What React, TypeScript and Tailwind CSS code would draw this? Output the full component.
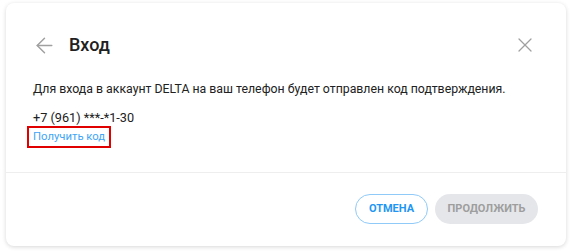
import React from 'react';
import { ArrowLeft, X } from 'lucide-react';

const App = () => {
  return (
    <div className="w-[572px] h-[251px] bg-white pt-[3px] pl-[6px]" style={{ fontFamily: 'Roboto, "Liberation Sans", sans-serif' }}>
      <div className="w-[560px] h-[243px] rounded-lg bg-white shadow-[0_1px_4px_rgba(0,0,0,0.16)] flex flex-col">
        {/* header */}
        <div className="flex items-center h-[24px] mt-[30px] pl-[26px] pr-[29px]">
          <ArrowLeft size={25} strokeWidth={1.4} className="text-[#a0a0a0]" />
          <span className="ml-[12px] text-[18px] font-medium text-[#212121] leading-none">Вход</span>
          <X size={24} strokeWidth={1.3} className="ml-auto text-[#a0a0a0]" />
        </div>

        {/* body */}
        <div className="pl-[21px] pr-[20px] mt-[25px] flex flex-col items-start">
          <p className="pl-[6px] text-[12.3px] leading-[15px] text-[#212121] whitespace-nowrap">
            Для входа в аккаунт DELTA на ваш телефон будет отправлен код подтверждения.
          </p>
          <p className="pl-[6px] mt-[13px] text-[12.7px] leading-[15px] text-[#212121]">+7 (961) ***-*1-30</p>
          <span className="mt-[1px] border-2 border-[#e00000] px-[4px] h-[22px] flex items-center text-[11.3px] text-[#42a5f5]">
            Получить код
          </span>
        </div>

        <div className="mt-[24px] border-t border-[#eeeeee]" />

        {/* footer */}
        <div className="flex justify-end gap-[7px] pr-[28px] mt-[21px]">
          <button className="h-[30px] w-[73px] rounded-full border border-[#90caf9] text-[11px] font-bold text-[#2196f3]">
            ОТМЕНА
          </button>
          <button className="h-[30px] w-[103px] rounded-full bg-[#e5e6ea] text-[11px] font-bold text-[#9e9e9e]">
            ПРОДОЛЖИТЬ
          </button>
        </div>
      </div>
    </div>
  );
};

export default App;
